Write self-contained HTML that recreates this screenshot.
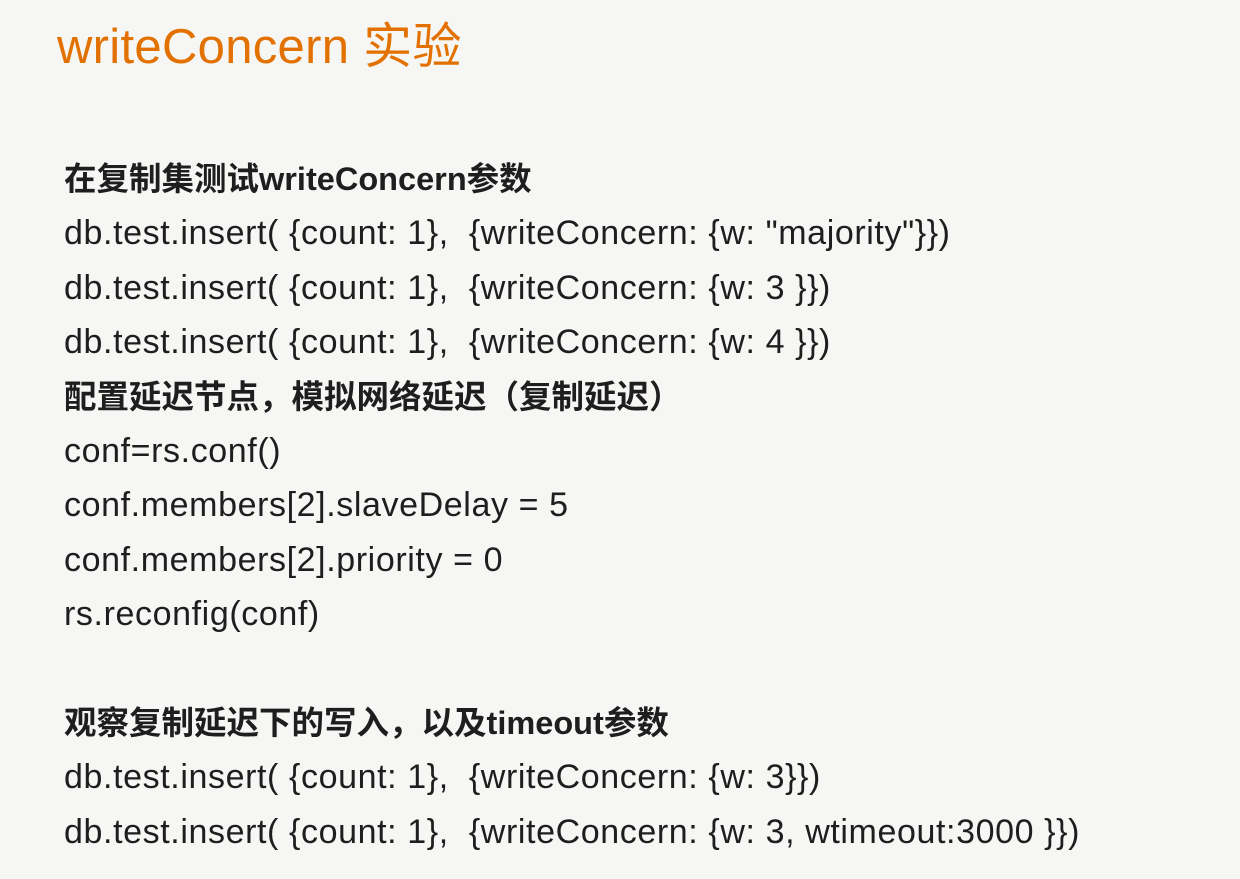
<!DOCTYPE html>
<html><head><meta charset="utf-8"><style>
html,body{margin:0;padding:0;}
body{width:1240px;height:879px;background:#f6f6f4;position:relative;overflow:hidden;font-family:"Liberation Sans","Noto Sans CJK SC",sans-serif;color:#1e1e1e;}
h1{position:absolute;left:57px;top:19px;margin:0;font-weight:normal;font-size:49px;color:#e27100;line-height:56px;letter-spacing:0.3px;}
.body{position:absolute;left:64px;top:152px;font-size:34px;line-height:54.4px;white-space:pre;letter-spacing:0.6px;}
b{font-weight:bold;font-size:32.5px;letter-spacing:0;}
</style></head><body>
<h1>writeConcern 实验</h1>
<div class="body"><b>在复制集测试writeConcern参数</b>
db.test.insert( {count: 1},  {writeConcern: {w: "majority"}})
db.test.insert( {count: 1},  {writeConcern: {w: 3 }})
db.test.insert( {count: 1},  {writeConcern: {w: 4 }})
<b>配置延迟节点，模拟网络延迟（复制延迟）</b>
conf=rs.conf()
conf.members[2].slaveDelay = 5
conf.members[2].priority = 0
rs.reconfig(conf)

<b>观察复制延迟下的写入，以及timeout参数</b>
db.test.insert( {count: 1},  {writeConcern: {w: 3}})
db.test.insert( {count: 1},  {writeConcern: {w: 3, wtimeout:3000 }})</div>
</body></html>
